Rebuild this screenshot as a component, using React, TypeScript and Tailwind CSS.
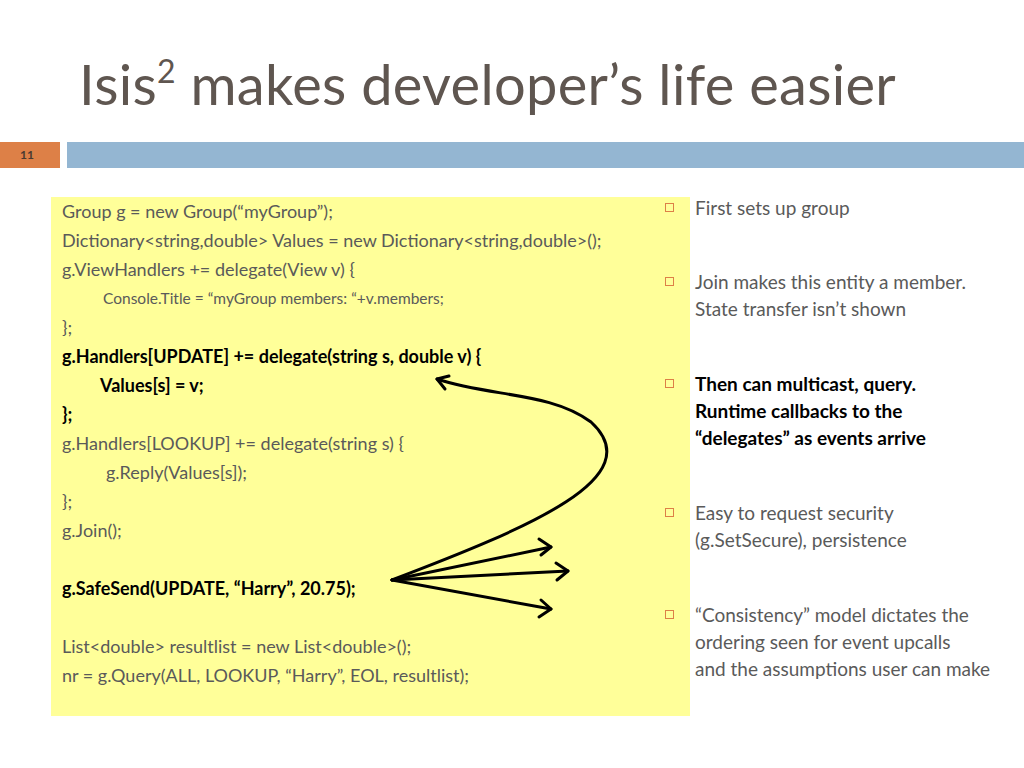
import React from 'react';

const font = { fontFamily: 'Lato, "Open Sans", sans-serif' };

const code: { t: string; b?: boolean; indent?: string; size?: string; gapBefore?: boolean }[] = [
  { t: 'Group g = new Group(“myGroup”);' },
  { t: 'Dictionary<string,double> Values = new Dictionary<string,double>();' },
  { t: 'g.ViewHandlers += delegate(View v) {' },
  { t: 'Console.Title = “myGroup members: “+v.members;', indent: 'pl-[41px]', size: 'text-[15.5px]' },
  { t: '};' },
  { t: 'g.Handlers[UPDATE] += delegate(string s, double v) {', b: true },
  { t: 'Values[s] = v;', b: true, indent: 'pl-[38px]' },
  { t: '};', b: true },
  { t: 'g.Handlers[LOOKUP] += delegate(string s) {' },
  { t: 'g.Reply(Values[s]);', indent: 'pl-[44px]' },
  { t: '};' },
  { t: 'g.Join();' },
  { t: 'g.SafeSend(UPDATE, “Harry”, 20.75);', b: true, gapBefore: true },
  { t: 'List<double> resultlist = new List<double>();', gapBefore: true },
  { t: 'nr = g.Query(ALL, LOOKUP, “Harry”, EOL, resultlist);' },
];

const bullets: { lines: string[]; b?: boolean; mt: string }[] = [
  { lines: ['First sets up group'], mt: 'mt-0' },
  { lines: ['Join makes this entity a member.', 'State transfer isn’t shown'], mt: 'mt-[47px]' },
  { lines: ['Then can multicast, query.', 'Runtime callbacks to the', '“delegates” as events arrive'], b: true, mt: 'mt-[48px]' },
  { lines: ['Easy to request security', '(g.SetSecure), persistence'], mt: 'mt-[48px]' },
  { lines: ['“Consistency” model dictates the', 'ordering seen for event upcalls', 'and the assumptions user can make'], mt: 'mt-[48px]' },
];

export default function App() {
  return (
    <div className="w-[1024px] h-[768px] bg-white overflow-hidden relative" style={font}>
      <h1 className="pl-[79px] pt-[48px] h-[142px] text-[56px] leading-[72px] text-[#5f5650] tracking-[0.3px] whitespace-nowrap">
        Isis<span className="text-[32px] relative -top-[22px]">2</span> makes developer’s life easier
      </h1>
      <div className="flex h-[26px]">
        <div className="w-[60px] bg-[#dd8047] text-[#4a3a30] text-[12px] font-bold flex items-center pl-[20px]">11</div>
        <div className="ml-[7px] flex-1 bg-[#94b6d2]" />
      </div>
      <div className="flex mt-[29px]">
        <div className="ml-[51px] w-[639px] h-[519px] shrink-0 bg-[#ffff99] relative pl-[11px] text-[#5a5a5a]">
          {code.map((l, i) => (
            <div
              key={i}
              className={`${l.size ?? 'text-[18px]'} h-[29px] leading-[29px] whitespace-nowrap ${l.indent ?? ''} ${l.b ? 'font-bold text-black' : ''} ${l.gapBefore ? 'mt-[29px]' : ''}`}
            >
              {l.t}
            </div>
          ))}
          <svg className="absolute left-0 top-0" width="639" height="519" viewBox="0 0 639 519" fill="none" stroke="black" strokeWidth="3" strokeLinecap="round" strokeLinejoin="round">
            <path d="M341 383 C 480 330, 600 280, 540 225 C 500 195, 440 200, 386 182" />
            <path d="M398 179 L386 182 L394 192" />
            <path d="M341 383 L500 350" />
            <path d="M488 342 L500 350 L490 358" />
            <path d="M341 383 L517 374" />
            <path d="M505 366 L517 374 L506 383" />
            <path d="M341 383 L500 412" />
            <path d="M490 403 L500 412 L488 420" />
          </svg>
        </div>
        <div className="-ml-[30px] relative w-[340px] text-[19px] leading-[27px] text-[#5a5a5a] -mt-[3px]">
          {bullets.map((b, i) => (
            <div key={i} className={`flex ${b.mt}`}>
              <div className="w-[35px] shrink-0 flex items-start pt-[9px] pl-[5px]">
                <div className="w-[9px] h-[9px] border border-[#dd8047]" />
              </div>
              <div className={b.b ? 'font-bold text-black' : ''}>
                {b.lines.map((l, j) => (
                  <div key={j} className="whitespace-nowrap">{l}</div>
                ))}
              </div>
            </div>
          ))}
        </div>
      </div>
    </div>
  );
}
